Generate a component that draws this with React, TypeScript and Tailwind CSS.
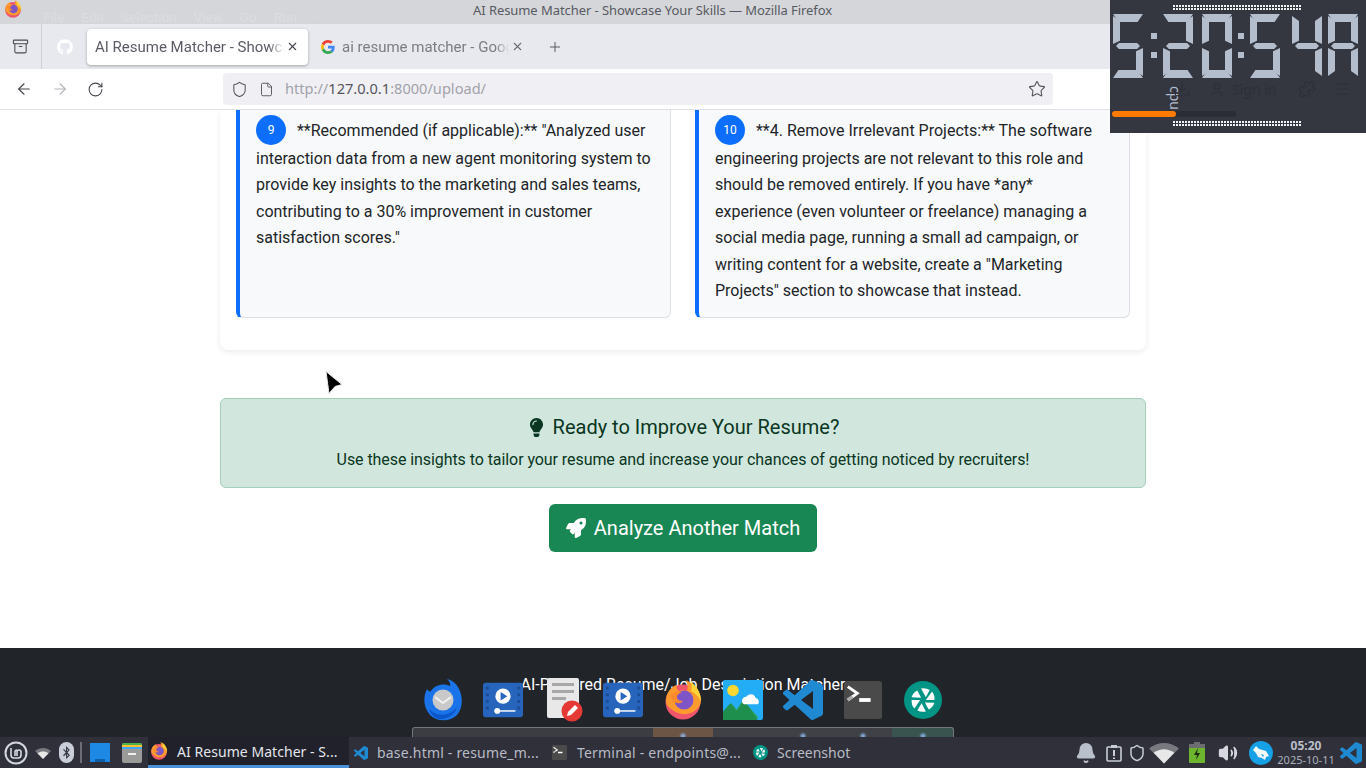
import React from "react";
import { ArrowLeft, ArrowRight, RotateCw, Shield, File, Star, Plus, X, Archive, Bell, User, Puzzle, Menu, Download, Volume2 } from "lucide-react";
import { FaGithub, FaLightbulb, FaRocket, FaBluetoothB } from "react-icons/fa";

const VSC_PATH =
  "M23.15 2.587L18.21.21a1.494 1.494 0 0 0-1.705.29l-9.46 8.63-4.12-3.128a.999.999 0 0 0-1.276.057L.327 7.261A1 1 0 0 0 .326 8.74L3.899 12 .326 15.26a1 1 0 0 0 .001 1.479L1.65 17.94a.999.999 0 0 0 1.276.057l4.12-3.128 9.46 8.63a1.492 1.492 0 0 0 1.704.29l4.942-2.377A1.5 1.5 0 0 0 24 20.06V3.939a1.5 1.5 0 0 0-.85-1.352zm-5.146 14.861L10.826 12l7.178-5.448v10.896z";

function VsCode({ size }: { size: number }) {
  return (
    <svg width={size} height={size} viewBox="0 0 24 24">
      <path d={VSC_PATH} fill="#1f8ad2" />
    </svg>
  );
}

function Firefox({ size }: { size: number }) {
  return (
    <svg width={size} height={size} viewBox="0 0 40 40">
      <circle cx="20" cy="22" r="17.5" fill="#f0556b" />
      <path d="M3 21C3 12 9 6 14 5c-1 3 0 5 2 6 3-1 5-1 8 0 1-4 1-7-1-11 8 4 15 12 15 20 0 5-3 9-8 12-6 3-13 3-19-1C7 28 3 26 3 21z" fill="#ff9b2e" />
      <path d="M27 1c6 4 11 11 11 20-3-5-6-8-10-10 1-3 1-6-1-10z" fill="#ffd43b" />
      <circle cx="21" cy="20" r="9.500" fill="#7d55c7" />
      <path d="M8 14c3-2 7-3 11-2-3 1-5 3-5 5 0 3 3 4 6 4-2 3-7 3-10 0-2-2-3-5-2-7z" fill="#ff8a2b" />
    </svg>
  );
}

function GoogleG() {
  return (
    <svg width="14" height="14" viewBox="0 0 48 48">
      <path fill="#EA4335" d="M24 9.5c3.5 0 6.7 1.2 9.2 3.6l6.9-6.9C35.9 2.4 30.5 0 24 0 14.6 0 6.5 5.4 2.6 13.2l8 6.2C12.5 13.7 17.8 9.5 24 9.5z" />
      <path fill="#4285F4" d="M46.9 24.5c0-1.6-.1-3.1-.4-4.5H24v9h12.9c-.6 3-2.200 5.5-4.700 7.200l7.700 6c4.500-4.200 7-10.300 7-17.700z" />
      <path fill="#FBBC05" d="M10.500 28.600c-.5-1.400-.8-3-.8-4.600s.3-3.200.8-4.600l-8-6.200C.9 16.400 0 20.100 0 24s.9 7.600 2.600 10.800l7.900-6.200z" />
      <path fill="#34A853" d="M24 48c6.500 0 11.900-2.100 15.900-5.800l-7.700-6c-2.200 1.500-4.900 2.300-8.200 2.300-6.200 0-11.500-4.200-13.400-9.900l-8 6.200C6.500 42.600 14.600 48 24 48z" />
    </svg>
  );
}

function Aperture({ size }: { size: number }) {
  return (
    <svg width={size} height={size} viewBox="0 0 40 40">
      <circle cx="20" cy="20" r="20" fill="#009485" />
      <g fill="#fff">
        <path d="M18 8a12 12 0 0 1 9 1.500L23 17z" />
        <path d="M29.500 11a12 12 0 0 1 2.500 9h-9z" />
        <path d="M32 23a12 12 0 0 1-6 7l-4-7.500z" />
        <path d="M23 32a12 12 0 0 1-9-1l4.500-7.500z" />
        <path d="M11 29a12 12 0 0 1-3-9h9z" />
        <path d="M8 17a12 12 0 0 1 6-7l4 7.500z" />
      </g>
    </svg>
  );
}

function TerminalIcon({ size }: { size: number }) {
  return (
    <svg width={size} height={size} viewBox="0 0 40 40">
      <rect width="40" height="40" rx="3" fill="#4a4a4a" />
      <path d="M4 6l10 7-10 7" fill="none" stroke="#fff" strokeWidth="3" />
      <path d="M4 20l5-3.500" fill="none" stroke="#aaa" strokeWidth="3" />
      <rect x="16" y="18" width="12" height="4" fill="#fff" />
    </svg>
  );
}

function VideoIcon() {
  return (
    <svg width="42" height="36" viewBox="0 0 42 36">
      <rect width="42" height="36" rx="3" fill="#2765bd" />
      <g fill="#1c4c93">
        <rect x="3" y="4" width="3" height="3" />
        <rect x="3" y="11" width="3" height="3" />
        <rect x="3" y="18" width="3" height="3" />
        <rect x="3" y="25" width="3" height="3" />
        <rect x="36" y="4" width="3" height="3" />
        <rect x="36" y="11" width="3" height="3" />
        <rect x="36" y="18" width="3" height="3" />
        <rect x="36" y="25" width="3" height="3" />
      </g>
      <circle cx="21" cy="14" r="8" fill="#fff" />
      <path d="M18.500 9.500l7 4.500-7 4.500z" fill="#2765bd" />
      <rect x="12" y="28.500" width="22" height="2" fill="#cfdcf0" />
      <circle cx="15" cy="29.500" r="3" fill="#fff" />
    </svg>
  );
}

function EditorIcon() {
  return (
    <svg width="40" height="44" viewBox="0 0 40 44">
      <rect x="4" y="0" width="32" height="40" rx="2" fill="#e8e8e8" />
      <rect x="9" y="5" width="22" height="3" fill="#a8a8a8" />
      <rect x="9" y="12" width="22" height="3" fill="#a8a8a8" />
      <rect x="9" y="19" width="14" height="3" fill="#a8a8a8" />
      <circle cx="29" cy="33" r="10.500" fill="#e53935" />
      <path d="M24 38l1-4 7-7 3 3-7 7z" fill="#fff" />
    </svg>
  );
}

function PhotosIcon() {
  return (
    <svg width="40" height="40" viewBox="0 0 38 38">
      <rect width="38" height="38" rx="2" fill="#22adf6" />
      <circle cx="9.500" cy="10" r="5.500" fill="#fdd835" />
      <path d="M0 36V32L8 22l5 6 6-9 15 17z" fill="#2e9e5b" />
      <path d="M0 38V30l7-8 6 8 7-11 13 19z" fill="#1f8f4e" />
      <path d="M18 20a4 4 0 0 1 4-4 5 5 0 0 1 9 1 3.500 3.500 0 0 1 2 6H20a3 3 0 0 1-2-3z" fill="#fff" />
    </svg>
  );
}

function ThunderbirdIcon() {
  return (
    <svg width="40" height="42" viewBox="0 0 40 42">
      <path d="M4 10C0 18 0 28 7 36c7 7 20 7 27 0 6-7 6-18 2-26-2-5-7-9-12-10 2 2 4 5 3 7C22 4 12 5 8 12c-1 1-3 0-4-2z" fill="#1a73e8" />
      <circle cx="20" cy="21" r="10.500" fill="#c9c9c9" />
      <path d="M12 18l8 6 8-6" fill="none" stroke="#f2f2f2" strokeWidth="2" />
      <path d="M6 30c8 8 20 8 28-2-2 8-10 12-16 12-6 0-10-4-12-10z" fill="#0b57c9" />
    </svg>
  );
}

function WifiFan({ w, top, bottom }: { w: number; top: string; bottom: string }) {
  return (
    <svg width={w} height={(w * 3) / 4} viewBox="0 0 32 24">
      <path d="M0 8C9 0 23 0 32 8L16 24z" fill={top} />
      <path d="M5 12.500c7-5 15-5 22 0L16 24z" fill={bottom} />
    </svg>
  );
}

function MintLogo() {
  return (
    <svg width="24" height="24" viewBox="0 0 24 24" fill="none" stroke="#d3d7de">
      <circle cx="12" cy="12" r="10.500" strokeWidth="2" />
      <path d="M7 7v7a3 3 0 0 0 3 3h4a3 3 0 0 0 3-3v-3a2 2 0 0 0-4 0v4m-2-4a2 2 0 0 1 2-2m-2 2v4" strokeWidth="1.600" />
    </svg>
  );
}

function Battery() {
  return (
    <svg width="16" height="21" viewBox="0 0 16 21">
      <rect x="5" y="0" width="6" height="2" fill="#6b6d70" />
      <rect x="0" y="2" width="16" height="19" rx="1" fill="#6eb52f" />
      <rect x="0" y="2" width="16" height="4" fill="#6b6d70" />
      <path d="M9 6l-4 7h3l-1 5 4-7H8z" fill="#1e2a14" />
    </svg>
  );
}

function ClipAlert() {
  return (
    <svg width="16" height="18" viewBox="0 0 16 18" fill="none" stroke="#c7ccd6" strokeWidth="1.600">
      <rect x="1" y="3" width="14" height="14" rx="1" />
      <rect x="5" y="1" width="6" height="3" fill="#c7ccd6" stroke="none" />
      <path d="M8 6v6M8 13.500v1.500" strokeWidth="2" />
    </svg>
  );
}

function TweetBlob() {
  return (
    <svg width="24" height="24" viewBox="0 0 24 24">
      <circle cx="12" cy="12" r="12" fill="#16a0e6" />
      <path d="M4 9l3-4 3 3 7 2 3 5-3 1-1 3-3-2-4-1-2-4z" fill="#f4f8fb" />
      <path d="M12 13l3 1-1 2z" fill="#16a0e6" />
    </svg>
  );
}

// lcd clock: one div per lit segment
const SEG_A = "absolute left-0 top-0 h-[8px] w-[30px] bg-[#b4bdcb] [clip-path:polygon(0_0,100%_0,82%_100%,18%_100%)]";
const SEG_B = "absolute right-0 top-[2px] h-[28px] w-[7px] bg-[#b4bdcb] [clip-path:polygon(100%_0,100%_100%,0_88%,0_18%)]";
const SEG_C = "absolute right-0 bottom-[2px] h-[28px] w-[7px] bg-[#b4bdcb] [clip-path:polygon(0_12%,100%_0,100%_100%,0_82%)]";
const SEG_D = "absolute bottom-0 left-0 h-[8px] w-[30px] bg-[#b4bdcb] [clip-path:polygon(18%_0,82%_0,100%_100%,0_100%)]";
const SEG_E = "absolute left-0 bottom-[2px] h-[28px] w-[7px] bg-[#b4bdcb] [clip-path:polygon(0_0,100%_12%,100%_82%,0_100%)]";
const SEG_F = "absolute left-0 top-[2px] h-[28px] w-[7px] bg-[#b4bdcb] [clip-path:polygon(0_0,100%_18%,100%_88%,0_100%)]";
const SEG_G = "absolute left-[3px] top-[29px] h-[6px] w-[24px] bg-[#b4bdcb] [clip-path:polygon(12%_0,88%_0,100%_50%,88%_100%,12%_100%,0_50%)]";

const DIGITS: Record<string, string[]> = {
  "5": [SEG_A, SEG_F, SEG_G, SEG_C, SEG_D],
  "2": [SEG_A, SEG_B, SEG_G, SEG_E, SEG_D],
  "0": [SEG_A, SEG_B, SEG_C, SEG_D, SEG_E, SEG_F],
  "4": [SEG_F, SEG_G, SEG_B, SEG_C],
  A: [SEG_A, SEG_B, SEG_C, SEG_E, SEG_F, SEG_G],
};

function LcdDigit({ d, className }: { d: string; className?: string }) {
  return (
    <div className={"relative h-[64px] w-[30px] shrink-0 " + (className || "")}>
      {DIGITS[d].map((s, i) => (
        <div key={i} className={s} />
      ))}
    </div>
  );
}

function LcdColon({ className }: { className: string }) {
  return (
    <div className={"flex h-[64px] w-[6px] shrink-0 flex-col gap-[13px] pt-[19px] " + className}>
      <div className="h-[6px] w-[6px] bg-[#b4bdcb]" />
      <div className="h-[6px] w-[6px] bg-[#b4bdcb]" />
    </div>
  );
}

function DotRow() {
  return (
    <div className="flex h-[5px] w-[129px] flex-col gap-[1px]">
      <div className="h-[2px] bg-[repeating-linear-gradient(90deg,#f2f3f5_0_2px,#343640_2px_3px)]" />
      <div className="h-[2px] bg-[repeating-linear-gradient(90deg,#f2f3f5_0_2px,#343640_2px_3px)]" />
    </div>
  );
}

function ClockWidget() {
  return (
    <div className="absolute right-0 top-0 flex h-[133px] w-[256px] flex-col bg-[#343640]">
      <div className="ml-[63px] mt-[5px]">
        <DotRow />
      </div>
      <div className="ml-[3px] mt-[4px] flex">
        <LcdDigit d="5" />
        <LcdColon className="ml-[8px]" />
        <LcdDigit d="2" className="ml-[6px]" />
        <LcdDigit d="0" className="ml-[9px]" />
        <LcdColon className="ml-[6px]" />
        <LcdDigit d="5" className="ml-[6px]" />
        <LcdDigit d="4" className="ml-[12px]" />
        <LcdDigit d="A" className="ml-[6px]" />
      </div>
      <div className="flex h-[34px] items-start whitespace-nowrap">
        <span className="ml-[58px] mt-[8px] shrink-0 text-[14px] leading-[14px] text-[#b4bdcb] [writing-mode:vertical-rl]">cpu</span>
        <Download size={18} strokeWidth={1.5} className="ml-[-9px] mt-[2px] shrink-0 text-[#2d2f38]" />
        <div className="ml-[17px] mt-[1px] flex shrink-0 items-center gap-[6px] text-[14px] text-[#2d2f38]">
          <User size={18} strokeWidth={1.5} />
          <span>Sign in</span>
        </div>
        <Puzzle size={18} strokeWidth={1.5} className="ml-[22px] mt-[2px] shrink-0 text-[#2d2f38]" />
        <Menu size={18} strokeWidth={1.5} className="ml-[17px] mt-[2px] shrink-0 text-[#2d2f38]" />
      </div>
      <div className="ml-[2px] mt-[-1px] h-[6px] w-[124px] rounded-full bg-[#2a2c36]">
        <div className="h-[6px] w-[64px] rounded-full bg-[#ff7a00]" />
      </div>
      <div className="ml-[63px] mt-[4px]">
        <DotRow />
      </div>
    </div>
  );
}

function TitleBar() {
  return (
    <div className="relative flex h-[24px] shrink-0 items-center bg-[#d5d6da] text-[13.5px] [font-family:Roboto,sans-serif]">
      <div className="ml-[4px] mb-[6px]">
        <Firefox size={18} />
      </div>
      <div className="ml-[21px] mt-[10px] flex gap-[17px] text-[#dcdde0]">
        <span>File</span>
        <span>Edit</span>
        <span>Selection</span>
        <span>View</span>
        <span>Go</span>
        <span>Run</span>
        <span>···</span>
      </div>
      <span className="absolute left-[473px] top-0 text-[13px] leading-[20px] tracking-[-0.07px] text-[#575a61] [font-family:'Noto_Sans',sans-serif]">
        AI Resume Matcher - Showcase Your Skills — Mozilla Firefox
      </span>
    </div>
  );
}

function TabBar() {
  return (
    <div className="flex h-[45px] shrink-0 items-center bg-[#e8e9ee] text-[15px] [font-family:Roboto,sans-serif]">
      <div className="flex h-[45px] w-[42px] items-center justify-center border-r border-[#cfd0d5]">
        <Archive size={17} strokeWidth={1.5} className="text-[#4a4b52]" />
      </div>
      <div className="ml-[15px] w-[18px] text-white">
        <FaGithub size={16} />
      </div>
      <div className="ml-[12px] flex h-[36px] w-[221px] items-center rounded-[4px] bg-white pl-[8px] text-[#5b5b66] shadow-[0_1px_3px_rgba(0,0,0,0.3)]">
        <span className="w-[189px] overflow-hidden whitespace-nowrap pt-[1px] [mask-image:linear-gradient(90deg,#000_92%,transparent)]">
          AI Resume Matcher - Showcase
        </span>
        <X size={13} strokeWidth={2} className="ml-[2px] text-[#44444c]" />
      </div>
      <div className="ml-[13px] flex items-center text-[#7b7c85]">
        <GoogleG />
        <span className="ml-[7px] w-[167px] overflow-hidden whitespace-nowrap pt-[1px] [mask-image:linear-gradient(90deg,#000_92%,transparent)]">
          ai resume matcher - Google
        </span>
        <X size={13} strokeWidth={2} className="ml-[2px] text-[#6b6c74]" />
      </div>
      <Plus size={16} strokeWidth={1.5} className="ml-[23px] text-[#5b5b66]" />
    </div>
  );
}

function NavBar() {
  return (
    <div className="flex h-[41px] shrink-0 items-center border-b border-[#e0e0e6] bg-white">
      <ArrowLeft size={18} strokeWidth={1.5} className="ml-[15px] text-[#45454d]" />
      <ArrowRight size={18} strokeWidth={1.5} className="ml-[18px] text-[#b4b4ba]" />
      <RotateCw size={17} strokeWidth={1.5} className="ml-[18px] text-[#45454d]" />
      <div className="ml-[119px] flex h-[32px] w-[830px] items-center rounded-[4px] bg-[#f0f0f4] text-[14.6px]">
        <Shield size={17} strokeWidth={1.5} className="ml-[8px] text-[#55555d]" />
        <File size={15} strokeWidth={1.5} className="ml-[11px] text-[#55555d]" />
        <span className="ml-[11px] text-[#a2a2aa]">
          http://<span className="text-[#55555d]">127.0.0.1</span>:8000/upload/
        </span>
        <Star size={18} strokeWidth={1.5} className="ml-auto mr-[7px] text-[#55555d]" />
      </div>
    </div>
  );
}

function NumberBadge({ n }: { n: number }) {
  return (
    <span className="mb-[1px] mr-[7px] inline-flex h-[30px] w-[30px] items-center justify-center rounded-full bg-[#0d6efd] align-[2px] text-[12px] text-white">
      {n}
    </span>
  );
}

function SuggestionCol({ n, children }: { n: number; children: React.ReactNode }) {
  return (
    <div className="rounded-b-[6px] border border-t-0 border-l-4 border-[#dee2e6] border-l-[#0d6efd] bg-[#f8f9fa] pb-[13px] pl-[16px] pr-[16px] pt-[5px] text-[16px] leading-[26.4px] text-[#212529]">
      <NumberBadge n={n} /> {children}
    </div>
  );
}

function Footer() {
  return (
    <div className="flex h-[89px] shrink-0 justify-center bg-[#212529] pt-[26px] text-[16px] leading-[22px] text-white [font-family:Roboto,sans-serif]">
      AI-Powered Resume/Job Description Matcher
    </div>
  );
}

function Dock() {
  return (
    <div className="absolute bottom-[31px] left-[412px] flex w-[542px] flex-col items-center">
      <div className="flex h-[44px] w-[540px] items-center">
        <div className="ml-[10px] flex w-[40px] justify-center"><ThunderbirdIcon /></div>
        <div className="ml-[20px] flex w-[40px] justify-center"><VideoIcon /></div>
        <div className="ml-[20px] flex w-[40px] justify-center"><EditorIcon /></div>
        <div className="ml-[20px] flex w-[40px] justify-center"><VideoIcon /></div>
        <div className="ml-[20px] flex w-[40px] justify-center"><Firefox size={40} /></div>
        <div className="ml-[20px] flex w-[40px] justify-center"><PhotosIcon /></div>
        <div className="ml-[20px] flex w-[40px] justify-center"><VsCode size={40} /></div>
        <div className="ml-[20px] flex w-[40px] justify-center"><TerminalIcon size={38} /></div>
        <div className="ml-[20px] flex w-[40px] justify-center"><Aperture size={38} /></div>
      </div>
      <div className="mt-[5px] h-[10px] w-[542px] rounded-t-[3px] border border-b-0 border-[#75777c] bg-[radial-gradient(circle_at_270px_8px,#8fbcf5_0,transparent_4px),radial-gradient(circle_at_390px_8px,#8fbcf5_0,transparent_4px),radial-gradient(circle_at_450px_8px,#8fbcf5_0,transparent_4px),radial-gradient(circle_at_510px_8px,#8fbcf5_0,transparent_4px),linear-gradient(90deg,#3b3d42_0_44.5%,#6d5546_44.5%_55.5%,#3f4146_55.5%_88.7%,#39544f_88.7%_100%)]" />
    </div>
  );
}

function Taskbar() {
  return (
    <div className="flex h-[31px] shrink-0 items-center bg-[#2f3039] text-[14px] text-[#b8bcc6]">
      <div className="ml-[4px]">
        <MintLogo />
      </div>
      <div className="ml-[7px]">
        <WifiFan w={16} top="#77797f" bottom="#e8e8e8" />
      </div>
      <div className="ml-[8px] flex h-[21px] w-[15px] items-center justify-center rounded-full bg-[#c9ced8] text-[#2f3039]">
        <FaBluetoothB size={13} />
      </div>
      <div className="ml-[6px] h-[21px] w-[2px] bg-[#6c6e76]" />
      <div className="ml-[8px] flex h-[19px] w-[20px] items-end justify-center bg-[#1e88e5]">
        <div className="h-[3px] w-[10px] bg-[#0e5fa8]" />
      </div>
      <div className="ml-[12px] flex h-[20px] w-[20px] flex-col overflow-hidden rounded-[2px] bg-[#9a9a98]">
        <div className="h-[2px] bg-[#4caf50]" />
        <div className="h-[2px] bg-[#fbc02d]" />
        <div className="h-[2px] bg-[#42a5f5]" />
        <div className="mx-auto mt-[4px] h-[2px] w-[8px] bg-[#f0f0f0]" />
      </div>
      <div className="ml-[6px] flex h-[31px] w-[201px] items-center border-b-[3px] border-[#4a90d9] bg-[#20212a] pl-[2px] text-[#e4e6ec]">
        <Firefox size={18} />
        <span className="ml-[9px] tracking-[0.05px]">AI Resume Matcher - S...</span>
      </div>
      <div className="ml-[5px] flex w-[198px] items-center">
        <VsCode size={14} />
        <span className="ml-[9px] whitespace-nowrap tracking-[0.2px]">base.html - resume_m...</span>
      </div>
      <div className="flex w-[201px] items-center">
        <TerminalIcon size={15} />
        <span className="ml-[10px] whitespace-nowrap tracking-[0.2px]">Terminal - endpoints@...</span>
      </div>
      <div className="flex items-center">
        <Aperture size={15} />
        <span className="ml-[9px]">Screenshot</span>
      </div>
      <div className="ml-auto flex items-center">
        <Bell size={22} fill="#b9c0cc" className="text-[#b9c0cc]" />
        <div className="ml-[9px]"><ClipAlert /></div>
        <Shield size={18} className="ml-[6px] text-[#c7ccd6]" />
        <div className="ml-[3px]">
          <WifiFan w={30} top="#77797f" bottom="#e8e8e8" />
        </div>
        <div className="ml-[10px] mr-[13px]">
          <Battery />
        </div>
        <Volume2 size={20} fill="#d5d8de" className="text-[#d5d8de]" />
        <div className="ml-[11px]">
          <TweetBlob />
        </div>
        <div className="ml-[5px] flex w-[56px] flex-col items-center text-[12px] leading-[14px] text-[#a9aeba]">
          <span className="font-bold text-[#b9bec9]">05:20</span>
          <span className="whitespace-nowrap text-[11px]">2025-10-11</span>
        </div>
        <div className="ml-[6px] mr-[4px]">
          <VsCode size={22} />
        </div>
      </div>
    </div>
  );
}

function App() {
  return (
    <div className="relative flex h-[768px] w-[1366px] flex-col overflow-hidden bg-white [font-family:'Noto_Sans','Liberation_Sans',sans-serif]">
      <TitleBar />
      <TabBar />
      <NavBar />

      <div className="min-h-0 flex-1 overflow-hidden [font-family:Roboto,sans-serif]">
        <div className="mx-auto w-[926px]">
          {/* suggestions card, top is scrolled away */}
          <div className="rounded-b-[8px] bg-white px-[16px] pb-[32px] shadow-[0_2px_6px_rgba(0,0,0,0.08)]">
            <div className="grid grid-cols-2 gap-[24px]">
              <SuggestionCol n={9}>
                **Recommended (if applicable):** "Analyzed user interaction data from a new agent monitoring system to provide key insights to the marketing and sales teams, contributing to a 30% improvement in customer satisfaction scores."
              </SuggestionCol>
              <SuggestionCol n={10}>
                **4. Remove Irrelevant Projects:** The software engineering projects are not relevant to this role and should be removed entirely. If you have *any* experience (even volunteer or freelance) managing a social media page, running a small ad campaign, or writing content for a website, create a "Marketing Projects" section to showcase that instead.
              </SuggestionCol>
            </div>
          </div>

          <div className="mt-[48px] flex h-[90px] flex-col items-center rounded-[6px] border border-[#a3cfbb] bg-[#d1e7dd] pt-[14px] text-[#0a3622]">
            <div className="flex items-center text-[20px] leading-[28px]">
              <FaLightbulb size={19} className="mr-[7px]" />
              Ready to Improve Your Resume?
            </div>
            <p className="mt-[7px] text-[16px] leading-[24px] tracking-[-0.07px]">
              Use these insights to tailor your resume and increase your chances of getting noticed by recruiters!
            </p>
          </div>

          <div className="mt-[16px] flex justify-center">
            <button className="flex h-[48px] w-[268px] items-center justify-center rounded-[6px] bg-[#198754] text-[20px] text-white">
              <FaRocket size={20} className="mr-[8px]" />
              Analyze Another Match
            </button>
          </div>
        </div>
      </div>

      <Footer />
      <Taskbar />

      <Dock />
      <ClockWidget />

      {/* mouse pointer */}
      <svg className="absolute left-[324px] top-[370px]" width="20" height="25" viewBox="0 0 20 25">
        <path d="M2 1.500L18 14.500l-7 2-6 7z" fill="#000" stroke="#e8e8e8" strokeWidth="1" strokeLinejoin="round" />
      </svg>
    </div>
  );
}

export default App;
